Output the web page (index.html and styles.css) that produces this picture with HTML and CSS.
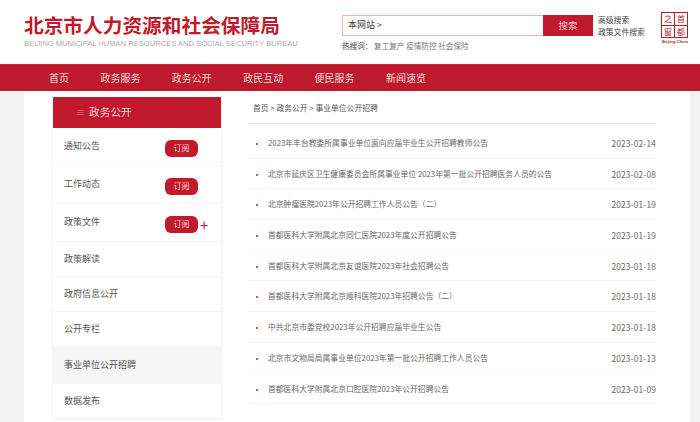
FILE: index.html
```html
<!DOCTYPE html>
<html lang="zh-CN">
<head>
    <meta charset="UTF-8">
    <meta name="viewport" content="width=device-width, initial-scale=1.0">
    <title>北京市人力资源和社会保障局</title>
    <link rel="stylesheet" href="styles.css">
</head>
<body>
    <header class="top">
        <div class="brand">
            <h1>北京市人力资源和社会保障局</h1>
            <p>BEIJING MUNICIPAL HUMAN RESOURCES AND SOCIAL SECURITY BUREAU</p>
        </div>
        <div class="search">
            <div class="search-box">
                <span class="search-input">本网站 &gt;</span>
                <span class="search-btn">搜索</span>
            </div>
            <div class="hot">热搜词： <span>复工复产 疫情防控 社会保险</span></div>
        </div>
        <div class="search-links">
            <a>高级搜索</a>
            <a>政策文件搜索</a>
        </div>
        <div class="seal">
            <div class="seal-grid">
                <span>之</span><span>首</span><span>窗</span><span>都</span>
            </div>
            <div class="seal-en">Beijing·China</div>
        </div>
    </header>

    <nav class="nav">
        <a>首页</a>
        <a>政务服务</a>
        <a>政务公开</a>
        <a>政民互动</a>
        <a>便民服务</a>
        <a>新闻速览</a>
    </nav>

    <div class="page">
        <div class="main">
            <aside class="side">
                <div class="side-title"><span class="side-icon">≡</span>政务公开</div>
                <div class="side-item h38"><span>通知公告</span><a class="sub">订阅</a></div>
                <div class="side-item h38"><span>工作动态</span><a class="sub">订阅</a></div>
                <div class="side-item h38"><span>政策文件</span><a class="sub">订阅</a><b class="plus">+</b></div>
                <div class="side-item"><span>政策解读</span></div>
                <div class="side-item"><span>政府信息公开</span></div>
                <div class="side-item"><span>公开专栏</span></div>
                <div class="side-item active"><span>事业单位公开招聘</span></div>
                <div class="side-item last"><span>数据发布</span></div>
            </aside>
            <section class="content">
                <div class="crumb">首页 &gt; 政务公开 &gt; 事业单位公开招聘</div>
                <ul class="list">
                    <li><a>2023年丰台教委所属事业单位面向应届毕业生公开招聘教师公告</a><span>2023-02-14</span></li>
                    <li><a>北京市延庆区卫生健康委员会所属事业单位 2023年第一批公开招聘医务人员的公告</a><span>2023-02-08</span></li>
                    <li><a>北京肿瘤医院2023年公开招聘工作人员公告（二）</a><span>2023-01-19</span></li>
                    <li><a>首都医科大学附属北京同仁医院2023年度公开招聘公告</a><span>2023-01-19</span></li>
                    <li><a>首都医科大学附属北京友谊医院2023年社会招聘公告</a><span>2023-01-18</span></li>
                    <li><a>首都医科大学附属北京顺科医院2023年招聘公告（二）</a><span>2023-01-18</span></li>
                    <li><a>中共北京市委党校2023年公开招聘应届毕业生公告</a><span>2023-01-18</span></li>
                    <li><a>北京市文物局局属事业单位2023年第一批公开招聘工作人员公告</a><span>2023-01-13</span></li>
                    <li><a>首都医科大学附属北京口腔医院2023年公开招聘公告</a><span>2023-01-09</span></li>
                </ul>
            </section>
        </div>
    </div>
</body>
</html>
```

FILE: styles.css
```css
* {
    box-sizing: border-box;
}
html, body {
    margin: 0;
    padding: 0;
    height: 422px;
    overflow: hidden;
}
body {
    font-family: "Noto Sans CJK SC", "Noto Sans", sans-serif;
    background-color: #fff;
    color: #555;
}
.top {
    display: flex;
    height: 64px;
    padding-left: 24px;
}
.brand {
    width: 318px;
    padding-top: 13px;
}
.brand h1 {
    margin: 0;
    font-size: 19.7px;
    line-height: 23px;
    font-weight: 700;
    color: #c01a2c;
    white-space: nowrap;
}
.brand p {
    margin: 3px 0 0;
    font-family: "Liberation Sans", Arial, sans-serif;
    font-size: 7.6px;
    line-height: 9px;
    color: #a9a9a9;
    white-space: nowrap;
}
.search {
    width: 251px;
    padding-top: 15px;
}
.search-box {
    display: flex;
    height: 21px;
    border: 1px solid #e3b4ba;
    border-right: none;
}
.search-input {
    flex: 1;
    padding-left: 5px;
    font-size: 9px;
    line-height: 18px;
    color: #444;
}
.search-btn {
    width: 50px;
    margin: -1px 0;
    background-color: #c01a2c;
    color: #f3c6cb;
    font-size: 9.5px;
    line-height: 21px;
    text-align: center;
}
.hot {
    margin-top: 4px;
    font-size: 7.6px;
    line-height: 11px;
    color: #444;
    white-space: nowrap;
}
.hot span {
    color: #777;
}
.search-links {
    display: flex;
    flex-direction: column;
    width: 68px;
    padding: 14px 0 0 5px;
    font-size: 7.8px;
    line-height: 12px;
    color: #444;
}
.seal {
    padding-top: 12px;
    width: 30px;
    color: #c01a2c;
}
.seal-grid {
    display: grid;
    grid-template-columns: 1fr 1fr;
    width: 27px;
    height: 26px;
    border: 1px solid #c01a2c;
    gap: 1px;
    background-color: #c01a2c;
}
.seal-grid span {
    background-color: #fff;
    font-size: 8px;
    line-height: 12px;
    text-align: center;
    font-family: "Noto Sans CJK SC", serif;
    overflow: hidden;
}
.seal-en {
    margin-top: 1px;
    width: 32px;
    margin-left: -2px;
    font-family: "Liberation Sans", Arial, sans-serif;
    font-size: 4px;
    line-height: 5px;
    font-weight: 700;
    text-align: center;
    white-space: nowrap;
}
.nav {
    display: flex;
    gap: 31.4px;
    height: 27px;
    padding-left: 49px;
    background-color: #bd1a2d;
    border-top: 1px solid #cf2a3c;
    color: #f6d5d8;
    font-size: 10px;
    line-height: 25px;
}
.page {
    height: 331px;
    padding: 0 10px 0 24px;
    background-color: #f2f2f2;
}
.main {
    display: flex;
    height: 100%;
    padding: 6px 34px 0 29px;
    background-color: #fff;
}
.side {
    width: 168px;
    height: 321px;
    box-shadow: 0 1px 4px rgba(0, 0, 0, 0.08);
}
.side-title {
    height: 31px;
    padding-left: 23px;
    background-color: #c01a2c;
    color: #f6d5d8;
    font-size: 10.7px;
    line-height: 30px;
}
.side-icon {
    margin-right: 4px;
    font-size: 9px;
    color: #e58f99;
}
.side-item {
    display: flex;
    align-items: center;
    height: 35px;
    padding-left: 11px;
    border-bottom: 1px solid #f6f6f6;
    font-size: 9px;
    color: #555;
}
.side-item.h38 {
    height: 38px;
}
.side-item.active {
    height: 37px;
    background-color: #f5f5f5;
}
.side-item.last {
    height: 34px;
    border-bottom: none;
}
.side-item span {
    width: 101px;
    margin-top: -2px;
}
.sub {
    width: 33px;
    height: 17px;
    margin: 4px 0 0 0;
    background-color: #c01a2c;
    border-radius: 6px;
    color: #f6d5d8;
    font-size: 8px;
    line-height: 16px;
    text-align: center;
}
.plus {
    margin: 4px 0 0 2px;
    font-size: 15px;
    line-height: 16px;
    font-weight: 400;
    color: #c01a2c;
}
.content {
    width: 408px;
    margin-left: 27px;
}
.crumb {
    height: 27px;
    padding-left: 5px;
    border-bottom: 1px solid #e8e8e8;
    font-size: 7.8px;
    line-height: 22px;
    color: #555;
}
.list {
    list-style: none;
    margin: 0;
    padding: 4px 0 0;
}
.list li {
    display: flex;
    justify-content: space-between;
    height: 30.7px;
    padding-left: 20px;
    border-bottom: 1px solid #f6f6f6;
    font-size: 7.8px;
    line-height: 30px;
    color: #666;
    position: relative;
}
.list li::before {
    content: "";
    position: absolute;
    left: 8px;
    top: 15px;
    width: 2px;
    height: 2px;
    border-radius: 50%;
    background-color: #c01a2c;
}
.list span {
    font-size: 8.3px;
    letter-spacing: 0.2px;
}
```
